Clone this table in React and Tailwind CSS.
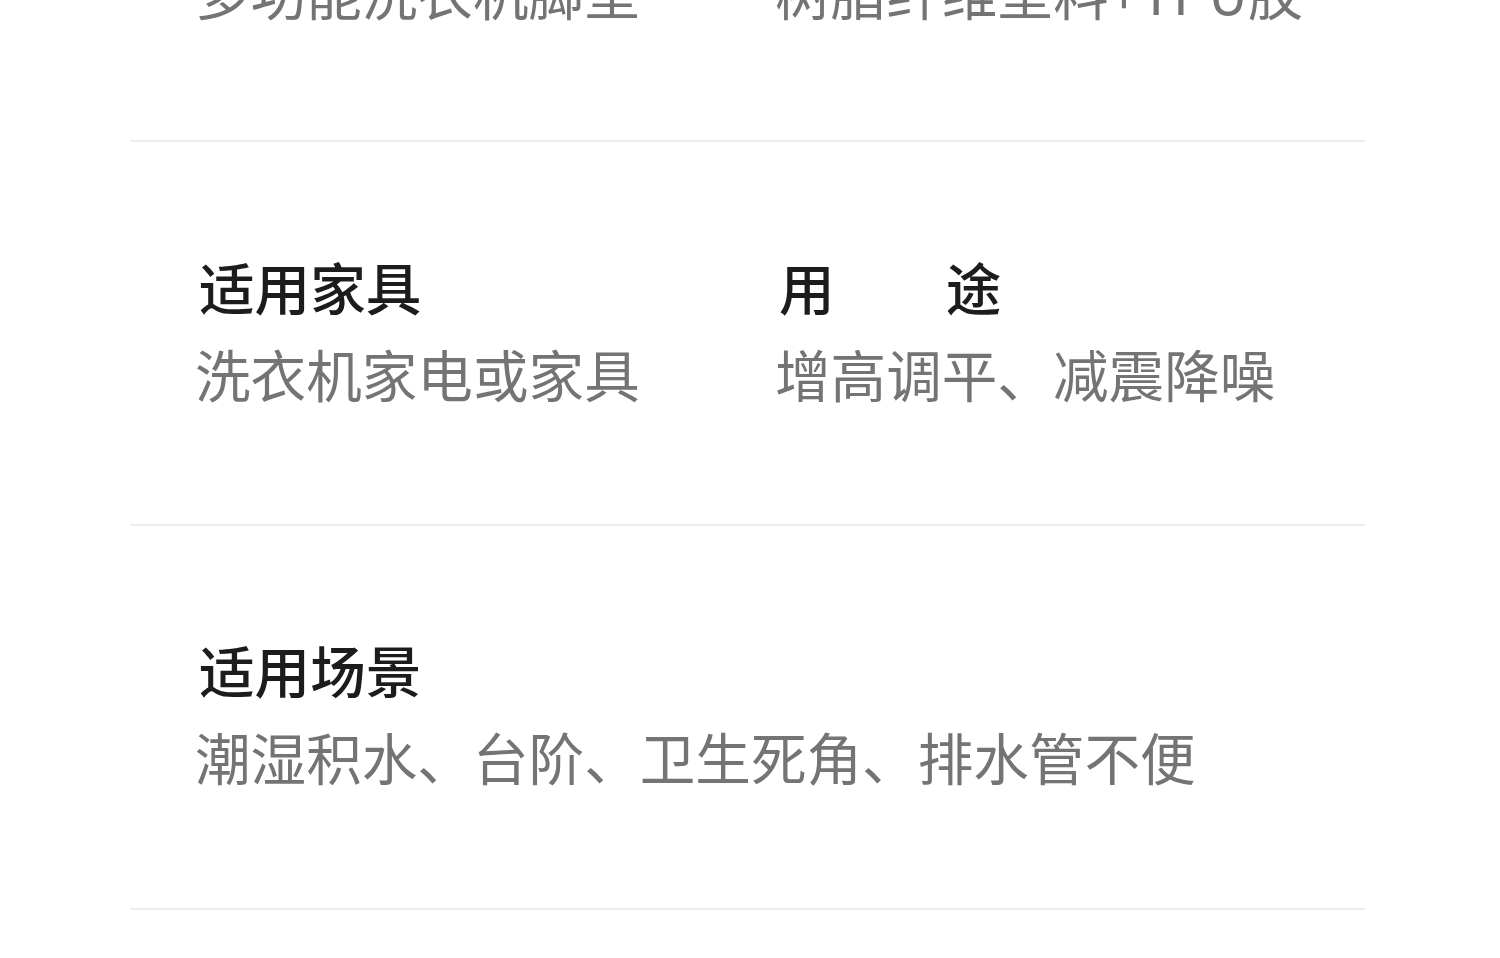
export default function App() {
  const font = { fontFamily: '"Noto Sans CJK SC", "Noto Sans", sans-serif' };
  const Label = ({ children }) => (
    <div className="pl-[4px] text-[55.6px] leading-[88px] font-medium text-[#1c1c1c] whitespace-pre">{children}</div>
  );
  const Value = ({ children }) => (
    <div className="text-[55.6px] leading-[86px] text-[#747474] whitespace-pre">{children}</div>
  );
  return (
    <div className="w-[1500px] h-[958px] bg-white overflow-hidden" style={font}>
      <div className="ml-[130px] w-[1235px]">
        <div className="-mt-[52px] pb-[106px] pl-[65px] grid grid-cols-[580px_1fr] border-b-2 border-[#ededed]">
          <Value>多功能洗衣机脚垫</Value>
          <Value>树脂纤维垫料+TPU胶</Value>
        </div>
        <div className="pt-[100px] pb-[108px] pl-[65px] grid grid-cols-[580px_1fr] border-b-2 border-[#ededed]">
          <div>
            <Label>适用家具</Label>
            <Value>洗衣机家电或家具</Value>
          </div>
          <div>
            <Label>用　　途</Label>
            <Value>增高调平、减震降噪</Value>
          </div>
        </div>
        <div className="pt-[99px] pb-[109px] pl-[65px] border-b-2 border-[#ededed]">
          <Label>适用场景</Label>
          <Value>潮湿积水、台阶、卫生死角、排水管不便</Value>
        </div>
      </div>
    </div>
  );
}
